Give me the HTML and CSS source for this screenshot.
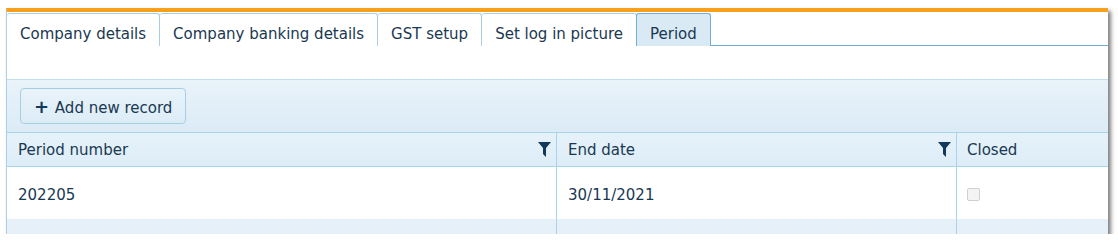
FILE: index.html
```html
<!DOCTYPE html>
<html lang="en">
<head>
    <meta charset="UTF-8">
    <title>Company setup - Period</title>
    <link rel="stylesheet" href="styles.css">
</head>
<body>
    <div class="panel">
        <ul class="tabs">
            <li class="tab">Company details</li>
            <li class="tab">Company banking details</li>
            <li class="tab">GST setup</li>
            <li class="tab">Set log in picture</li>
            <li class="tab active">Period</li>
        </ul>

        <div class="spacer"></div>

        <div class="toolbar">
            <button class="add-button"><span class="plus">+</span> Add new record</button>
        </div>

        <div class="grid">
            <div class="cell head">Period number
                <svg class="filter" width="13" height="15" viewBox="0 0 13 15"><path d="M0 0H13L8 6V15L5 12V6Z" fill="#123a58"/></svg>
            </div>
            <div class="cell head">End date
                <svg class="filter" width="13" height="15" viewBox="0 0 13 15"><path d="M0 0H13L8 6V15L5 12V6Z" fill="#123a58"/></svg>
            </div>
            <div class="cell head last">Closed</div>

            <div class="cell row">202205</div>
            <div class="cell row">30/11/2021</div>
            <div class="cell row last"><span class="checkbox"></span></div>

            <div class="cell alt"></div>
            <div class="cell alt"></div>
            <div class="cell alt last"></div>
        </div>
    </div>
</body>
</html>
```

FILE: styles.css
```css
body {
    margin: 0;
    padding: 8px 0 0 6px;
    background-color: white;
    font-family: "DejaVu Sans", Verdana, sans-serif;
    font-size: 15px;
    color: #1a3852;
}
.panel {
    width: 1101px;
    border-top: 4px solid #f8a01c;
    border-left: 1px solid #a9d0e6;
    background-color: white;
    box-shadow: 3px 3px 4px rgba(0, 0, 0, 0.5);
}
.tabs {
    display: flex;
    list-style: none;
    margin: 0;
    padding: 1px 0 0 0;
    border-bottom: 1px solid #6dafd6;
}
.tab {
    height: 22px;
    padding: 10px 13px 0 13px;
    line-height: 20px;
    border: 1px solid #a7d0e7;
    border-bottom: none;
    border-left: none;
    border-radius: 3px 3px 0 0;
    margin-bottom: -1px;
    background-color: white;
}
.tab.active {
    background-color: #d9eaf5;
    border: 1px solid #6dafd6;
    border-bottom: none;
    margin-left: -1px;
}
.spacer {
    height: 33px;
}
.toolbar {
    padding: 8px 13px 8px 13px;
    border-top: 1px solid #c3dfee;
    border-bottom: 1px solid #a9d3ea;
    background: linear-gradient(#e9f3fa, #dbebf6);
}
.add-button {
    height: 36px;
    padding: 0 13px;
    font-family: inherit;
    font-size: 15px;
    color: #1a3852;
    border: 1px solid #a6cfe4;
    border-radius: 4px;
    background: linear-gradient(#e9f3fa, #dcecf6);
    cursor: pointer;
}
.plus {
    font-weight: bold;
    font-size: 18px;
    color: #123a58;
    margin-right: 1px;
}
.grid {
    display: grid;
    grid-template-columns: 550px 400px 1fr;
}
.cell {
    border-right: 1px solid #a9d3ea;
    padding: 0 11px;
    display: flex;
    align-items: center;
}
.cell.last {
    border-right: none;
    padding-left: 10px;
}
.head {
    height: 33px;
    border-bottom: 1px solid #a9d3ea;
    background: linear-gradient(#e6f2fa, #ddedf7);
    justify-content: space-between;
    padding-right: 5px;
}
.filter {
    display: block;
}
.row {
    height: 52px;
    padding-top: 3px;
    box-sizing: border-box;
}
.alt {
    height: 15px;
    background-color: #e5f0f8;
}
.checkbox {
    display: inline-block;
    width: 11px;
    height: 11px;
    border: 1px solid #cfcfcf;
    border-radius: 2px;
    background-color: #f4f4f4;
}
```
